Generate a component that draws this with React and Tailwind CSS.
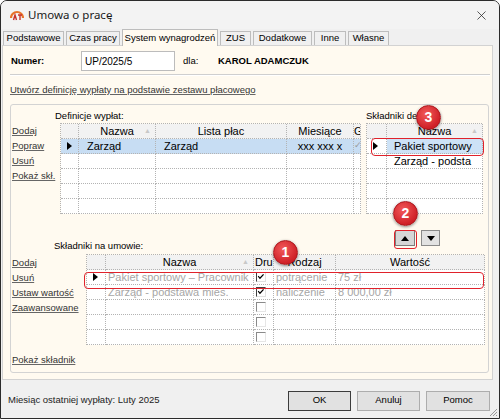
import { X } from "lucide-react";

function Arrow() {
  return (
    <span className="inline-block w-0 h-0 border-y-[4px] border-y-transparent border-l-[5px] border-l-black" />
  );
}

function Check({ checked }) {
  return (
    <span
      className={
        "relative inline-block w-[10px] h-[10px] border bg-white " +
        (checked
          ? "border-t-[#404040] border-l-[#404040] border-r-[#e0e0e0] border-b-[#e0e0e0]"
          : "border-t-[#8a8a8a] border-l-[#8a8a8a] border-r-[#e6e6e6] border-b-[#e6e6e6]")
      }
    >
      {checked && (
        <svg viewBox="0 0 10 10" className="absolute inset-0 w-full h-full">
          <path d="M1.5 4 L3.7 6.6 L8.2 1.8" fill="none" stroke="#000" strokeWidth="1.5" />
        </svg>
      )}
    </span>
  );
}

function Cell({ children, className = "" }) {
  return (
    <div
      className={
        "h-[15px] border-r border-b border-dotted border-[#b3b3b3] overflow-hidden whitespace-nowrap flex items-center " +
        className
      }
    >
      {children}
    </div>
  );
}

function SortMark() {
  return <span className="absolute right-[4px] top-[3px] text-[7px] leading-none text-[#c8c8c8]">▲</span>;
}

function Badge({ n, className }) {
  return (
    <div
      className={
        "absolute w-[25px] h-[25px] rounded-full border border-[#a8161c] bg-[radial-gradient(circle_at_40%_35%,#f25a5a,#cf2027_70%)] shadow-[0_1px_3px_rgba(0,0,0,0.45)] flex items-center justify-center text-white font-bold text-[14px] " +
        className
      }
    >
      {n}
    </div>
  );
}

function Link({ children, className = "" }) {
  return (
    <div className={"h-[15px] leading-[15px] text-[#333] underline decoration-[#666] underline-offset-[1px] " + className}>
      {children}
    </div>
  );
}

export default function App() {
  const tabs = [
    { label: "Podstawowe", w: "w-[61px]" },
    { label: "Czas pracy", w: "w-[54px]" },
    { label: "System wynagrodzeń", w: "w-[96px]", active: true },
    { label: "ZUS", w: "w-[31px]" },
    { label: "Dodatkowe", w: "w-[59px]" },
    { label: "Inne", w: "w-[32px]" },
    { label: "Własne", w: "w-[41px]" },
  ];

  return (
    <div className="relative w-[500px] h-[419px] overflow-hidden border border-[#2b2b2b] rounded-t-[7px] bg-[#f0f0f0] font-['Liberation_Sans',Arial,sans-serif] text-[9.5px] text-black flex flex-col">
      {/* title bar */}
      <div className="h-[28px] shrink-0 flex items-center pl-[9px] pr-[9px] bg-[#f3f3f3]">
        <svg width="14" height="12" viewBox="0 0 14 12">
          <path d="M1 9 A6 6 0 0 1 13 9" fill="none" stroke="#e8742a" strokeWidth="2.2" />
          <path d="M3.5 11 L5 6 L6.5 11 M8 6 H12 M10 6 V11" fill="none" stroke="#c7322a" strokeWidth="1.4" />
        </svg>
        <span className="ml-[4px] font-['Noto_Sans',sans-serif] text-[11.5px] text-[#1a1a1a]">Umowa o pracę</span>
        <X size={15} strokeWidth={1.2} className="ml-auto mr-[1px] text-[#222]" />
      </div>

      {/* tabs */}
      <div className="h-[16px] shrink-0 flex items-end pl-[2px] gap-[2px]">
        {tabs.map((t) => (
          <div
            key={t.label}
            className={
              t.w +
              " border border-b-0 border-[#bdbdbd] flex items-center justify-center whitespace-nowrap " +
              (t.active ? "h-[17px] bg-[#fffaf0] relative top-[1px] z-10" : "h-[14px] bg-[#f0f0f0]")
            }
          >
            {t.label}
          </div>
        ))}
      </div>

      {/* tab page */}
      <div className="ml-[1px] w-[491px] h-[335px] shrink-0 bg-[#fffaf0] border border-[#d2d2d2] flex flex-col">
        <div className="mt-[5px] h-[20px] flex items-center">
          <span className="ml-[8px] w-[70px] font-bold">Numer:</span>
          <div className="w-[94px] h-[20px] bg-white border border-[#bcbcbc] flex items-center pl-[3px] text-[10px]">UP/2025/5</div>
          <span className="ml-[8px] w-[35px]">dla:</span>
          <span className="font-bold">KAROL ADAMCZUK</span>
        </div>

        <div className="mt-[3px] ml-[7px] w-[480px] h-[2px] border-t border-[#cfcfcf] border-b border-b-white" />

        <div className="mt-[8px] ml-[7px] h-[12px] leading-[12px] text-[#333] underline decoration-[#666]">
          Utwórz definicję wypłaty na podstawie zestawu płacowego
        </div>

        {/* group box */}
        <div className="mt-[8px] ml-[7px] w-[479px] h-[269px] border border-[#d3d3d3] rounded-[3px] flex flex-col">
          <div className="mt-[5px] h-[12px] leading-[12px] flex">
            <span className="ml-[44px] w-[311px]">Definicje wypłat:</span>
            <span>Składniki definicji:</span>
          </div>

          <div className="mt-[1px] flex items-start">
            <div className="w-[49px] pl-[1px]">
              <Link>Dodaj</Link>
              <Link>Popraw</Link>
              <Link>Usuń</Link>
              <Link>Pokaż skł.</Link>
            </div>

            <div className="w-[300px] border-t border-l border-dotted border-[#b3b3b3] grid grid-cols-[18px_77px_131px_67px_7px] text-[11px]">
              <Cell className="bg-[#f2f2f2]" />
              <Cell className="bg-[#f2f2f2] justify-center relative">Nazwa<SortMark /></Cell>
              <Cell className="bg-[#f2f2f2] justify-center">Lista płac</Cell>
              <Cell className="bg-[#f2f2f2] justify-center">Miesiące</Cell>
              <Cell className="bg-[#f2f2f2]">G</Cell>
              <Cell className="bg-[#c7ddf3] pl-[6px]"><Arrow /></Cell>
              <Cell className="bg-[#c7ddf3] pl-[8px]">Zarząd</Cell>
              <Cell className="bg-[#c7ddf3] pl-[8px]">Zarząd</Cell>
              <Cell className="bg-[#c7ddf3] justify-center">xxx xxx x</Cell>
              <Cell className="bg-[#c7ddf3] text-[#9a9a9a] text-[9px]">✓</Cell>
              {Array.from({ length: 20 }).map((_, i) => (
                <Cell key={i} className="bg-white" />
              ))}
            </div>

            <div className="ml-[6px] w-[116px] border-t border-l border-dotted border-[#b3b3b3] grid grid-cols-[20px_96px] text-[11px]">
              <Cell className="bg-[#f2f2f2]" />
              <Cell className="bg-[#f2f2f2] justify-center relative">Nazwa<SortMark /></Cell>
              <Cell className="bg-white pl-[6px]"><Arrow /></Cell>
              <Cell className="bg-[#cde2f6] pl-[7px]">Pakiet sportowy</Cell>
              <Cell className="bg-white" />
              <Cell className="bg-white pl-[7px]">Zarząd - podsta</Cell>
              {Array.from({ length: 6 }).map((_, i) => (
                <Cell key={i} className="bg-white" />
              ))}
            </div>
          </div>

          <div className="mt-[16px] h-[22px] flex">
            <span className="self-end ml-[43px] w-[341px] h-[12px] leading-[12px]">Składniki na umowie:</span>
            <div className="self-start flex gap-[6px]">
              <div className="w-[20px] h-[16px] bg-[#d6d6d6] border border-[#7d7d7d] flex items-center justify-center">
                <span className="w-0 h-0 border-x-[4px] border-x-transparent border-b-[5px] border-b-black" />
              </div>
              <div className="w-[19px] h-[16px] bg-[#e2e2e2] border border-[#8a8a8a] flex items-center justify-center">
                <span className="w-0 h-0 border-x-[4px] border-x-transparent border-t-[5px] border-t-black" />
              </div>
            </div>
          </div>

          <div className="mt-[2px] flex items-start">
            <div className="w-[75px] pl-[1px] pt-[1px]">
              <Link>Dodaj</Link>
              <Link>Usuń</Link>
              <Link>Ustaw wartość</Link>
              <Link>Zaawansowane</Link>
            </div>
            <div className="w-[398px] border-t border-l border-dotted border-[#b3b3b3] grid grid-cols-[19px_148px_20px_62px_149px] text-[11px]">
              <Cell className="bg-[#f2f2f2]" />
              <Cell className="bg-[#f2f2f2] justify-center relative">Nazwa<SortMark /></Cell>
              <Cell className="bg-[#f2f2f2] pl-[1px]">Dru</Cell>
              <Cell className="bg-[#f2f2f2] justify-center">Rodzaj</Cell>
              <Cell className="bg-[#f2f2f2] justify-center">Wartość</Cell>

              <Cell className="bg-white pl-[6px]"><Arrow /></Cell>
              <Cell className="bg-white pl-[2px] text-[#a6a6a6]">Pakiet sportowy – Pracownik</Cell>
              <Cell className="bg-white pl-[2px]"><Check checked /></Cell>
              <Cell className="bg-white pl-[2px] text-[#a6a6a6]">potrącenie</Cell>
              <Cell className="bg-white pl-[2px] text-[#a6a6a6]">75 zł</Cell>

              <Cell className="bg-white" />
              <Cell className="bg-white pl-[2px] text-[#a6a6a6]">Zarząd - podstawa mies.</Cell>
              <Cell className="bg-white pl-[2px]"><Check checked /></Cell>
              <Cell className="bg-white pl-[2px] text-[#a6a6a6]">naliczenie</Cell>
              <Cell className="bg-white pl-[2px] text-[#a6a6a6]">8 000,00 zł</Cell>

              {[0, 1, 2].map((i) => (
                <div key={i} className="contents">
                  <Cell className="bg-white" />
                  <Cell className="bg-white" />
                  <Cell className="bg-white pl-[2px]"><Check /></Cell>
                  <Cell className="bg-white" />
                  <Cell className="bg-white" />
                </div>
              ))}
            </div>
          </div>

          <div className="mt-[7px] pl-[1px]">
            <Link>Pokaż składnik</Link>
          </div>
        </div>
      </div>

      {/* footer */}
      <div className="flex-1 flex items-center pl-[7px] pr-[9px] pt-[3px]">
        <span className="text-[#222]">Miesiąc ostatniej wypłaty: Luty 2025</span>
        <div className="ml-auto flex gap-[6px]">
          <div className="w-[63px] h-[20px] bg-[#e1e1e1] border border-[#3c3c3c] flex items-center justify-center">OK</div>
          <div className="w-[63px] h-[20px] bg-[#e1e1e1] border border-[#adadad] flex items-center justify-center">Anuluj</div>
          <div className="w-[64px] h-[20px] bg-[#e1e1e1] border border-[#adadad] flex items-center justify-center">Pomoc</div>
        </div>
      </div>

      <svg className="absolute right-[1px] bottom-[1px]" width="10" height="10" viewBox="0 0 10 10">
        <path d="M9 2 L2 9 M9 5 L5 9 M9 8 L8 9" stroke="#9a9a9a" strokeWidth="1" />
      </svg>

      {/* highlights */}
      <div className="absolute left-[370px] top-[137px] w-[113px] h-[18px] border-[1.5px] border-[#e0222b] rounded-[4px]" />
      <div className="absolute left-[393px] top-[229px] w-[23px] h-[19px] border-[1.5px] border-[#e0222b] rounded-[3px]" />
      <div className="absolute left-[83px] top-[271px] w-[400px] h-[17px] border-[1.5px] border-[#e0222b] rounded-[4px]" />

      <Badge n="3" className="left-[415px] top-[104px]" />
      <Badge n="2" className="left-[392px] top-[200px]" />
      <Badge n="1" className="left-[272px] top-[239px]" />
    </div>
  );
}
